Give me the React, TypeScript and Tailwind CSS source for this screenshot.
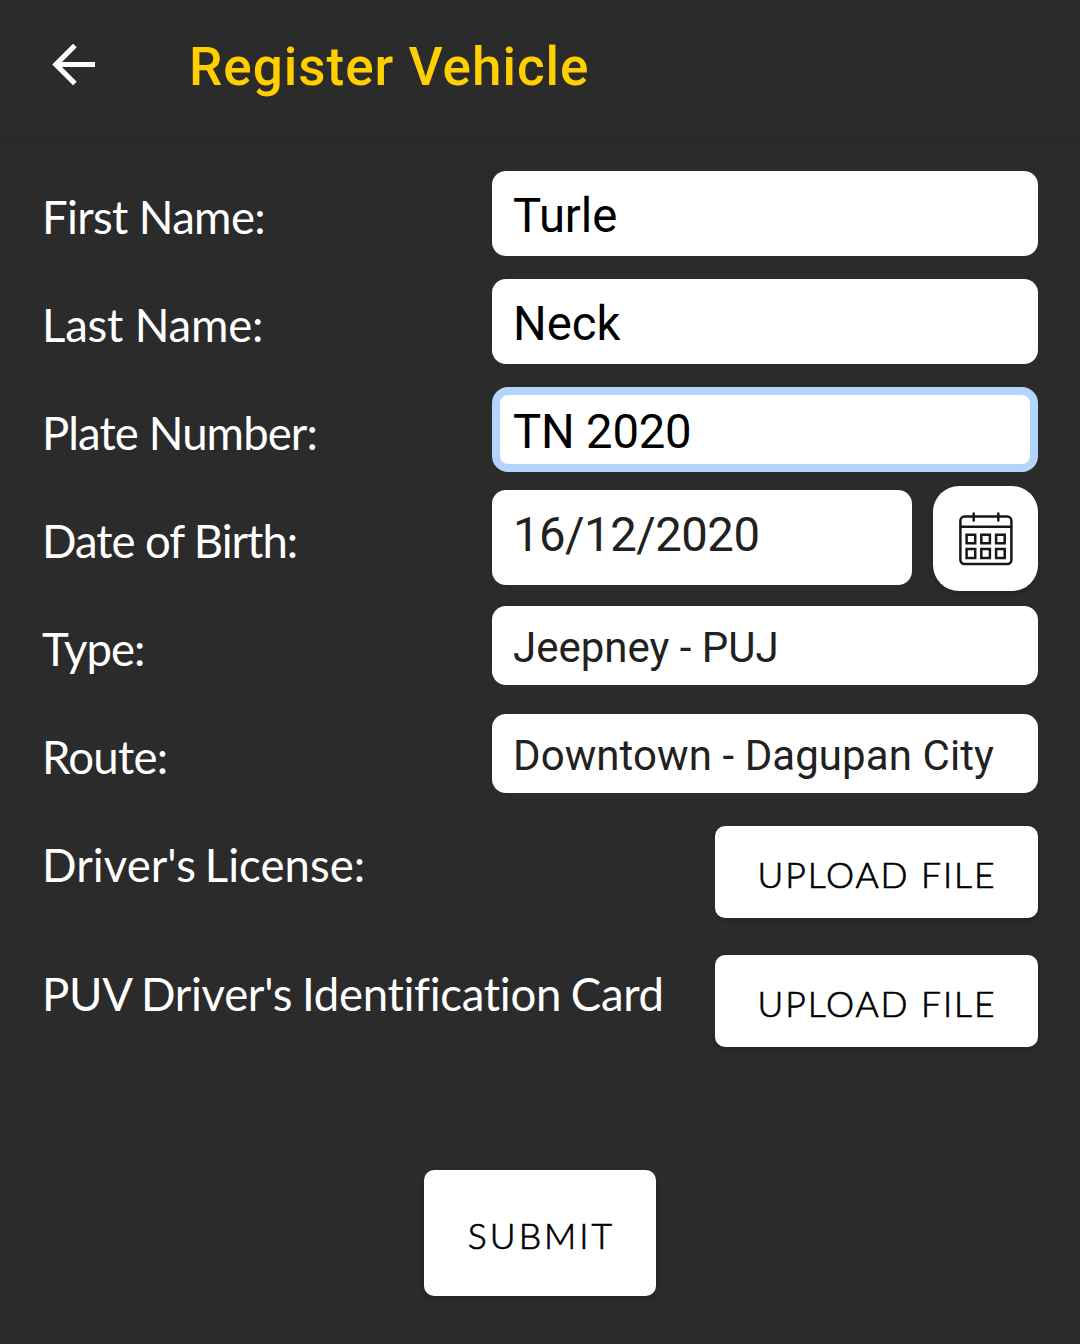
import type { ReactNode } from "react";

function Row({ label, spacing, tall, children }: { label: string; spacing: string; tall?: boolean; children: ReactNode }) {
  return (
    <div className={`flex items-start justify-between ${tall ? "h-[129px]" : "h-[108px]"}`}>
      <label className={`mt-[26.5px] whitespace-nowrap font-[Lato,sans-serif] text-[45.5px] leading-[60px] text-white ${spacing}`}>{label}</label>
      {children}
    </div>
  );
}

function UploadButton() {
  return (
    <button className="mt-[18px] flex h-[92px] w-[323px] items-center justify-center rounded-[10px] bg-white pt-[5px] pl-[1px] font-[Lato,sans-serif] text-[35.5px] font-light tracking-[1.9px] whitespace-nowrap text-black shadow-[0_2px_5px_rgba(0,0,0,0.2)] [-webkit-text-stroke:0.7px_black]">
      UPLOAD FILE
    </button>
  );
}

function CalendarIcon() {
  return (
    <svg width="54" height="54" viewBox="0 0 54 54" fill="none" stroke="#171717" strokeWidth="2.5" strokeLinecap="round">
      <rect x="1.4" y="4.6" width="51" height="47.4" rx="4" />
      <path d="M1.6 14.8H52.2M14.7 1.4V8.5M39.3 1.4V8.5" />
      <path strokeLinecap="butt" d="M7.6 22.7h8.6v8.6H7.6zM22.3 22.7h8.6v8.6h-8.6zM37.1 22.7h8.6v8.6h-8.6zM7.6 37.1h8.6v8.8H7.6zM22.3 37.1h8.6v8.8h-8.6zM37.1 37.1h8.6v8.8h-8.6z" />
    </svg>
  );
}

const field = "flex items-center rounded-[14px] bg-white px-[21px] whitespace-nowrap";

export default function App() {
  return (
    <div className="h-[1344px] w-[1080px] overflow-hidden bg-[#2b2b2b] font-[Roboto,sans-serif]">
      <header className="flex h-[137px] items-start bg-[#2b2b2b] shadow-[0_2px_10px_rgba(0,0,0,0.1)]">
        <button className="mt-[43px] ml-[52px] h-[43px] w-[43px]" aria-label="Back">
          <svg width="43" height="43" viewBox="0 0 43 43" fill="none" stroke="white" strokeWidth="5.2">
            <path d="M43 21.5H5M22.9 2.5L3.9 21.5L22.9 40.5" />
          </svg>
        </button>
        <h1 className="mt-[36px] ml-[94px] text-[53px] leading-[62px] font-medium tracking-[1px] whitespace-nowrap text-[#ffcf00]">Register Vehicle</h1>
      </header>
      <main className="px-[42px] pt-[23px]">
        <Row label="First Name:" spacing="tracking-[-0.65px]">
          <div className={`${field} mt-[11px] h-[85px] w-[546px] pt-[6px] text-[47.25px] tracking-[-0.1px] text-black`}>Turle</div>
        </Row>
        <Row label="Last Name:" spacing="tracking-[-0.2px]">
          <div className={`${field} mt-[11px] h-[85px] w-[546px] pt-[6px] text-[47.25px] text-black`}>Neck</div>
        </Row>
        <Row label="Plate Number:" spacing="tracking-[-0.9px]">
          <div className="mt-[11px] flex h-[85px] w-[546px] items-center rounded-[16px] border-8 border-[#b3d4fc] bg-white px-[13px] pt-[6px] text-[47.25px] tracking-[-0.2px] whitespace-nowrap text-black">TN 2020</div>
        </Row>
        <Row label="Date of Birth:" spacing="tracking-[-1.05px]">
          <div className="flex w-[546px] items-start justify-between">
            <div className={`${field} mt-[6px] h-[95px] w-[420px] pb-[5px] text-[47.25px] tracking-[-0.5px] text-[#212121]`}>16/12/2020</div>
            <button aria-label="Pick date" className="mt-[2px] flex h-[105px] w-[105px] items-center justify-center rounded-[26px] bg-white shadow-[0_2px_5px_rgba(0,0,0,0.2)]">
              <CalendarIcon />
            </button>
          </div>
        </Row>
        <Row label="Type:" spacing="tracking-[-1px]">
          <div className={`${field} mt-[14px] h-[79px] w-[546px] pt-[4px] text-[42px] text-[#212121]`}>Jeepney - PUJ</div>
        </Row>
        <Row label="Route:" spacing="tracking-[-0.75px]">
          <div className={`${field} mt-[14px] h-[79px] w-[546px] pt-[4px] text-[42px] tracking-[0.08px] text-[#212121]`}>Downtown - Dagupan City</div>
        </Row>
        <Row label="Driver's License:" spacing="tracking-[0.05px] [word-spacing:-3px]" tall>
          <UploadButton />
        </Row>
        <Row label="PUV Driver's Identification Card" spacing="tracking-[-0.3px] [word-spacing:-1.5px]" tall>
          <UploadButton />
        </Row>
        <div className="flex justify-center pt-[104px]">
          <button className="flex h-[126px] w-[232px] items-center justify-center rounded-[10px] bg-white pt-[5px] pl-[3px] font-[Lato,sans-serif] text-[35.5px] font-light tracking-[3px] text-black shadow-[0_2px_5px_rgba(0,0,0,0.2)] [-webkit-text-stroke:0.7px_black]">
            SUBMIT
          </button>
        </div>
      </main>
    </div>
  );
}
